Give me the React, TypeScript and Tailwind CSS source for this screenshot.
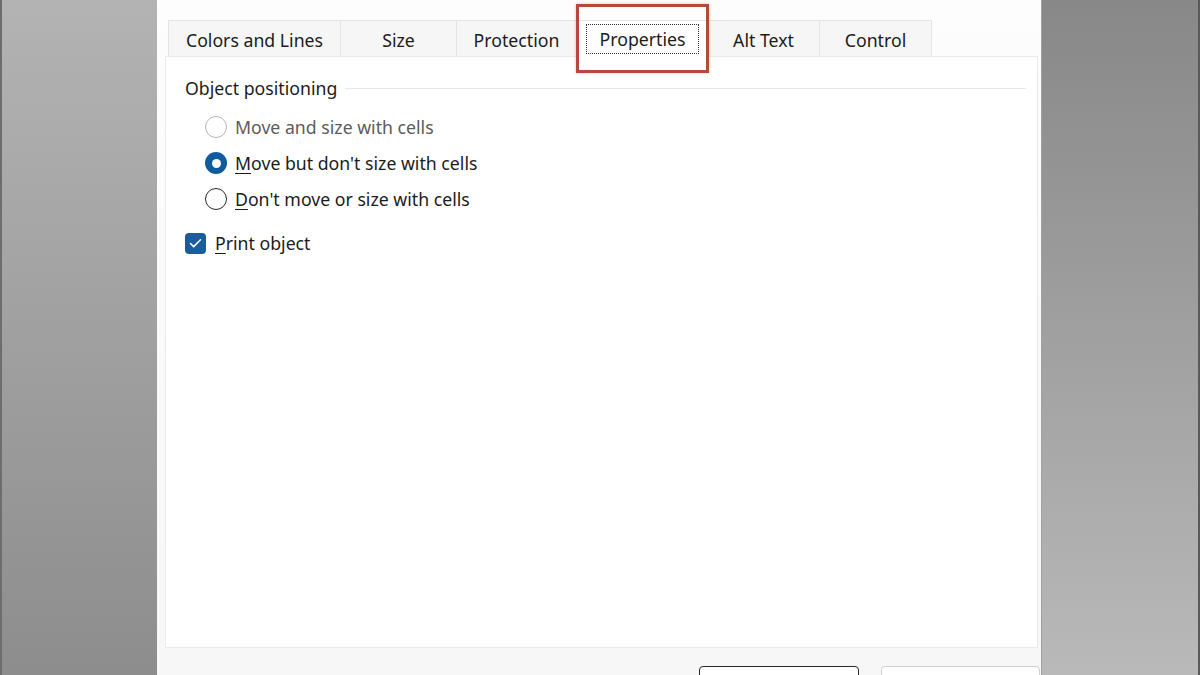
import { Check } from 'lucide-react';

const tabs = ['Colors and Lines', 'Size', 'Protection', 'Properties', 'Alt Text', 'Control'];
const tabWidths = ['w-[173px]', 'w-[116px]', 'w-[120px]', 'w-[131px]', 'w-[112px]', 'w-[112px]'];

function Radio({ label, state, hotkey }: { label: string; state: 'disabled' | 'on' | 'off'; hotkey?: boolean }) {
  return (
    <div className="flex h-[36px] items-center gap-[8px]">
      {state === 'on' && (
        <span className="flex h-[22px] w-[22px] items-center justify-center rounded-full bg-[#105b9e]">
          <span className="h-[9px] w-[9px] rounded-full bg-white" />
        </span>
      )}
      {state === 'off' && <span className="h-[22px] w-[22px] rounded-full border-[1.5px] border-[#2b2b2b] bg-white" />}
      {state === 'disabled' && <span className="h-[22px] w-[22px] rounded-full border border-[#b5b5b5] bg-white" />}
      <span className={state === 'disabled' ? 'text-[#5c5c5c]' : 'text-[#1c1c1c]'}>
        {hotkey ? (
          <>
            <span className="underline underline-offset-[3px]">{label[0]}</span>
            {label.slice(1)}
          </>
        ) : (
          label
        )}
      </span>
    </div>
  );
}

export default function App() {
  return (
    <div className="flex h-[675px] w-[1200px] overflow-hidden font-['Noto_Sans',sans-serif] text-[17.7px]">
      {/* left backdrop */}
      <div className="w-[157px] border-l-2 border-[#6d6d6d] bg-gradient-to-b from-[#b3b3b3] to-[#8d8d8d]" />

      {/* DIALOG */}
      <div className="flex w-[885px] flex-col bg-gradient-to-b from-[#fdfdfd] to-[#f7f7f7] border-r border-[#a0a0a0]">
        <div className="h-[20px]" />

        {/* TABS */}
        <div className="relative z-10 ml-[11px] flex h-[36px]">
          {tabs.map((tab, i) =>
            tab === 'Properties' ? (
              <div key={tab} className={`relative ${tabWidths[i]} -mb-px flex items-center justify-center border-x border-t border-[#e4e4e4] bg-white`}>
                <span className="flex h-[30px] w-[113px] items-center justify-center border border-dotted border-[#333] text-[#1c1c1c]">
                  {tab}
                </span>
                {/* annotation box */}
                <div className="pointer-events-none absolute -left-[2px] -right-[2px] -top-[17px] -bottom-[16px] border-[3px] border-[#b34a3c] shadow-[0_0_3px_rgba(180,74,60,0.35)]" />
              </div>
            ) : (
              <div
                key={tab}
                className={`${tabWidths[i]} flex items-center justify-center border-t border-r border-[#e5e5e5] bg-[#f6f6f6] pt-[3px] text-[#1c1c1c] ${i === 0 ? 'border-l' : ''}`}
              >
                {tab}
              </div>
            )
          )}
        </div>

        {/* PANEL */}
        <div className="ml-[8px] mr-[3px] flex-1 border border-[#ebebeb] bg-white pl-[19px] pr-[11px] pt-[19px]">
          <div className="flex h-[24px] items-center gap-[8px]">
            <span className="text-[#1c1c1c]">Object positioning</span>
            <div className="h-px flex-1 bg-[#e8e8e8]" />
          </div>

          <div className="mt-[9px] pl-[20px]">
            <Radio label="Move and size with cells" state="disabled" />
            <Radio label="Move but don't size with cells" state="on" hotkey />
            <Radio label="Don't move or size with cells" state="off" hotkey />
          </div>

          <div className="mt-[8px] flex h-[36px] items-center gap-[9px]">
            <span className="flex h-[21px] w-[21px] items-center justify-center rounded-[4px] bg-[#1b5d9c]">
              <Check className="h-[15px] w-[15px] text-white" strokeWidth={2.5} />
            </span>
            <span className="text-[#1c1c1c]">
              <span className="underline underline-offset-[3px]">P</span>rint object
            </span>
          </div>
        </div>

        {/* FOOTER */}
        <div className="flex h-[27px] shrink-0 items-start justify-end gap-[22px] overflow-hidden pr-[1px] pt-[18px]">
          <button className="h-[32px] w-[160px] rounded-[4px] border-[1.5px] border-[#2a2a2a] bg-white" />
          <button className="h-[32px] w-[159px] rounded-[4px] border border-[#d0d0d0] bg-white" />
        </div>
      </div>

      {/* right backdrop */}
      <div className="flex-1 border-r-2 border-[#5a5a5a] bg-gradient-to-b from-[#888888] to-[#b9b9b9]" />
    </div>
  );
}
